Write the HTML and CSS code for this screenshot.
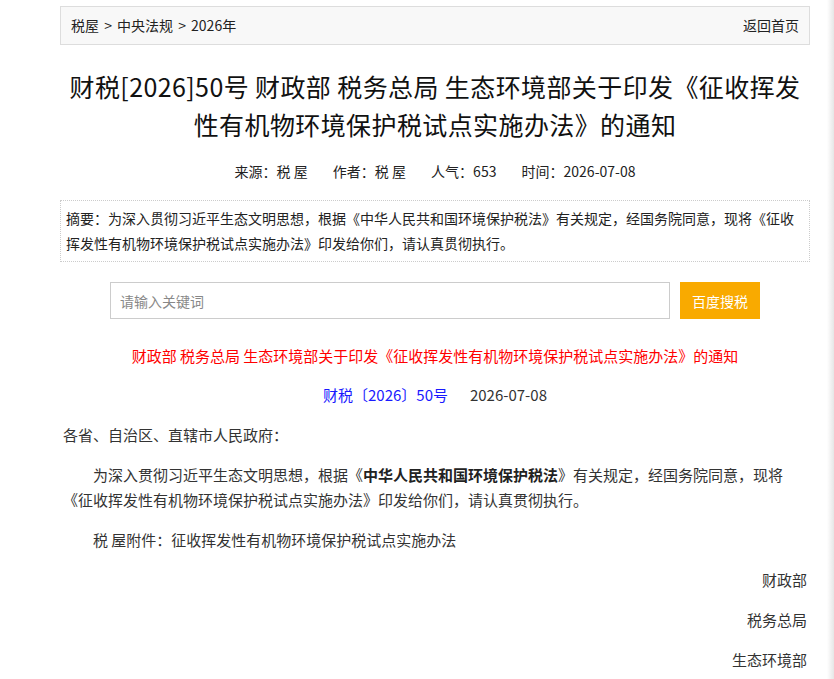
FILE: index.html
```html
<!DOCTYPE html>
<html lang="zh-CN">
<head>
    <meta charset="UTF-8">
    <meta name="viewport" content="width=device-width, initial-scale=1.0">
    <title>财税[2026]50号 财政部 税务总局 生态环境部关于印发《征收挥发性有机物环境保护税试点实施办法》的通知</title>
    <link rel="stylesheet" href="styles.css">
</head>
<body>
    <div class="pagina">
        <div class="migalhas">
            <span>税屋 &gt; 中央法规 &gt; 2026年</span>
            <a href="#">返回首页</a>
        </div>

        <h1 class="titulo">财税[2026]50号 财政部 税务总局 生态环境部关于印发《征收挥发性有机物环境保护税试点实施办法》的通知</h1>

        <div class="info">
            <span>来源：税 屋</span>
            <span>作者：税 屋</span>
            <span>人气：653</span>
            <span>时间：2026-07-08</span>
        </div>

        <div class="resumo">摘要：为深入贯彻习近平生态文明思想，根据《中华人民共和国环境保护税法》有关规定，经国务院同意，现将《征收挥发性有机物环境保护税试点实施办法》印发给你们，请认真贯彻执行。</div>

        <form class="busca" onsubmit="return false">
            <input type="text" placeholder="请输入关键词">
            <button type="submit">百度搜税</button>
        </form>

        <div class="texto">
            <p class="destaque">财政部 税务总局 生态环境部关于印发《征收挥发性有机物环境保护税试点实施办法》的通知</p>
            <p class="numero"><span class="doc">财税〔2026〕50号</span><span>2026-07-08</span></p>
            <p>各省、自治区、直辖市人民政府：</p>
            <p class="recuo">为深入贯彻习近平生态文明思想，根据《<strong>中华人民共和国环境保护税法</strong>》有关规定，经国务院同意，现将《征收挥发性有机物环境保护税试点实施办法》印发给你们，请认真贯彻执行。</p>
            <p class="recuo">税 屋附件：征收挥发性有机物环境保护税试点实施办法</p>
            <p class="assinatura">财政部</p>
            <p class="assinatura">税务总局</p>
            <p class="assinatura">生态环境部</p>
        </div>
    </div>
    <div class="borda"></div>
</body>
</html>
```

FILE: styles.css
```css
body {
    font-family: "Noto Sans CJK SC", "Microsoft YaHei", sans-serif;
    margin: 0;
    background-color: #fff;
    color: #333;
}

.pagina {
    width: 750px;
    margin-left: 60px;
    padding-top: 6px;
}

.migalhas {
    display: flex;
    justify-content: space-between;
    height: 37px;
    line-height: 37px;
    padding: 0 10px;
    border: 1px solid #ddd;
    background-color: #f8f8f8;
    font-size: 14px;
    word-spacing: 2px;
    color: #222;
}

.migalhas a {
    color: #222;
    text-decoration: none;
}

.titulo {
    margin: 22px 0 0;
    padding: 0 8px;
    font-size: 25px;
    line-height: 38px;
    letter-spacing: 0.4px;
    font-weight: normal;
    text-align: center;
    color: #111;
}

.info {
    margin-top: 14px;
    line-height: 28px;
    font-size: 14px;
    text-align: center;
    color: #222;
}

.info span {
    margin: 0 11px;
}

.resumo {
    margin-top: 15px;
    padding: 5px;
    border: 1px dotted #ccc;
    font-size: 14px;
    line-height: 25px;
    color: #222;
}

.busca {
    display: flex;
    justify-content: center;
    gap: 10px;
    margin: 20px 0 0;
}

.busca input {
    width: 560px;
    height: 37px;
    box-sizing: border-box;
    padding: 0 9px;
    border: 1px solid #ccc;
    font-family: inherit;
    font-size: 14px;
    outline: none;
}

.busca input::placeholder {
    color: #888;
}

.busca button {
    width: 80px;
    height: 37px;
    border: none;
    background-color: #f9aa00;
    color: #fff;
    font-family: inherit;
    font-size: 14px;
    cursor: pointer;
}

.texto {
    padding: 0 3px;
    font-size: 15px;
    color: #333;
}

.texto p {
    margin: 15px 0 0;
    line-height: 25px;
}

.texto p.destaque {
    margin-top: 24px;
    text-align: center;
    color: #f00;
}

.texto p.numero {
    margin-top: 14px;
    text-align: center;
}

.numero .doc {
    color: #1a1aff;
    margin-right: 22px;
}

.recuo {
    text-indent: 2em;
}

.recuo strong {
    color: #222;
}

.assinatura {
    text-align: right;
}

.borda {
    position: fixed;
    top: 0;
    right: 0;
    width: 7px;
    height: 100%;
    background: linear-gradient(to right, #fff, #e6e6e6);
}
```
